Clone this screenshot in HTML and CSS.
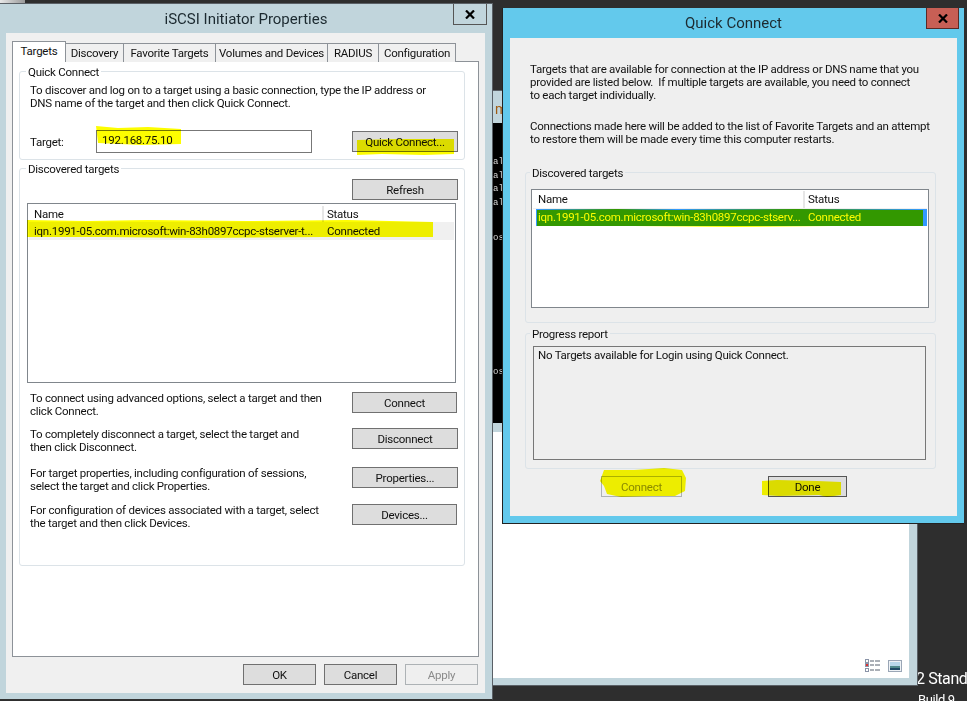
FILE: index.html
```html
<!DOCTYPE html>
<html lang="en">
<head>
    <meta charset="UTF-8">
    <title>iSCSI Initiator Properties</title>
    <link rel="stylesheet" href="styles.css">
</head>
<body>
    <div class="sliver"></div>

    <div class="desktop-text">
        <div class="edition">2 Stand</div>
        <div class="build">Build 9</div>
    </div>

    <!-- window behind the dialogs -->
    <div class="back-window">
        <div class="ribbon">m</div>
        <div class="console">
            <div class="console-line first">al</div>
            <div class="console-line">al</div>
            <div class="console-line">al</div>
            <div class="console-line">al</div>
            <div class="console-line os">os</div>
            <div class="console-line os2">os</div>
        </div>
        <div class="band"></div>
        <div class="back-body">
            <svg class="view-icon" width="16" height="13" viewBox="0 0 16 13">
                <rect x="0.5" y="0.5" width="3" height="3" fill="#fff" stroke="#8a94a8"/>
                <rect x="0.5" y="4.5" width="3" height="3" fill="#d33" stroke="#8a94a8"/>
                <rect x="0.5" y="9.5" width="3" height="3" fill="#fff" stroke="#8a94a8"/>
                <path d="M5 2h4M10 2h5M5 6h4M10 6h5M5 11h4M10 11h5" stroke="#56606e" fill="none"/>
            </svg>
            <svg class="view-icon" width="14" height="12" viewBox="0 0 14 12">
                <rect x="0.5" y="0.5" width="13" height="11" fill="#eef2f6" stroke="#9aa6b6"/>
                <rect x="2" y="2" width="10" height="4" fill="#b8d8ea"/>
                <rect x="2" y="6" width="10" height="2" fill="#4f8a8c"/>
                <rect x="2" y="8" width="10" height="2" fill="#1f4a66"/>
            </svg>
        </div>
    </div>

    <!-- iSCSI Initiator Properties -->
    <div class="window props">
        <div class="title">iSCSI Initiator Properties</div>
        <div class="close">
            <svg width="10" height="9" viewBox="0 0 10 9"><path d="M1 0.5l8 8M9 0.5l-8 8" stroke="#000" stroke-width="2.2" fill="none"/></svg>
        </div>
        <div class="client">
            <div class="tabs">
                <div class="tab active">Targets</div>
                <div class="tab">Discovery</div>
                <div class="tab">Favorite Targets</div>
                <div class="tab">Volumes and Devices</div>
                <div class="tab">RADIUS</div>
                <div class="tab">Configuration</div>
            </div>
            <div class="pane">
                <div class="group quick">
                    <div class="group-title">Quick Connect</div>
                    <p class="text intro">To discover and log on to a target using a basic connection, type the IP address or<br>DNS name of the target and then click Quick Connect.</p>
                    <div class="target-row">
                        <label class="target-label">Target:</label>
                        <div class="input">192.168.75.10</div>
                        <button class="btn wide">Quick Connect...</button>
                    </div>
                </div>
                <div class="group discovered">
                    <div class="group-title">Discovered targets</div>
                    <div class="refresh-row"><button class="btn wide">Refresh</button></div>
                    <div class="list props-list">
                        <div class="list-head">
                            <div class="col-name">Name</div>
                            <div class="col-status">Status</div>
                        </div>
                        <div class="list-row">
                            <div class="col-name">iqn.1991-05.com.microsoft:win-83h0897ccpc-stserver-t...</div>
                            <div class="col-status">Connected</div>
                        </div>
                    </div>
                    <div class="action-row first">
                        <p class="text">To connect using advanced options, select a target and then<br>click Connect.</p>
                        <button class="btn narrow">Connect</button>
                    </div>
                    <div class="action-row">
                        <p class="text">To completely disconnect a target, select the target and<br>then click Disconnect.</p>
                        <button class="btn wide">Disconnect</button>
                    </div>
                    <div class="action-row gap13">
                        <p class="text">For target properties, including configuration of sessions,<br>select the target and click Properties.</p>
                        <button class="btn wide">Properties...</button>
                    </div>
                    <div class="action-row gap11">
                        <p class="text">For configuration of devices associated with a target, select<br>the target and then click Devices.</p>
                        <button class="btn narrow">Devices...</button>
                    </div>
                </div>
            </div>
            <div class="footer">
                <button class="btn foot">OK</button>
                <button class="btn foot">Cancel</button>
                <button class="btn foot disabled">Apply</button>
            </div>
        </div>
    </div>

    <!-- Quick Connect -->
    <div class="window qc">
        <div class="title">Quick Connect</div>
        <div class="close red">
            <svg width="10" height="9" viewBox="0 0 10 9"><path d="M1 0.5l8 8M9 0.5l-8 8" stroke="#000" stroke-width="2.2" fill="none"/></svg>
        </div>
        <div class="client">
            <p class="text qc-p1">Targets that are available for connection at the IP address or DNS name that you<br>provided are listed below.&nbsp; If multiple targets are available, you need to connect<br>to each target individually.</p>
            <p class="text qc-p2">Connections made here will be added to the list of Favorite Targets and an attempt<br>to restore them will be made every time this computer restarts.</p>
            <div class="group qc-targets">
                <div class="group-title">Discovered targets</div>
                <div class="list qc-list">
                    <div class="list-head">
                        <div class="col-name">Name</div>
                        <div class="col-status">Status</div>
                    </div>
                    <div class="list-row selected">
                        <div class="col-name">iqn.1991-05.com.microsoft:win-83h0897ccpc-stserv...</div>
                        <div class="col-status">Connected</div>
                    </div>
                </div>
            </div>
            <div class="group qc-progress">
                <div class="group-title">Progress report</div>
                <div class="report">No Targets available for Login using Quick Connect.</div>
            </div>
            <div class="qc-buttons">
                <button class="btn qc-connect disabled">Connect</button>
                <button class="btn qc-done">Done</button>
            </div>
        </div>
    </div>

    <!-- marker pen strokes drawn on top of the screenshot -->
    <svg class="marker" width="967" height="701" viewBox="0 0 967 701">
        <path d="M96 126l22 2 30-1 33 2v15l-40 1-43-2z"/>
        <path d="M357 140l40-1 57 0v15l-30 1-42-1-25 1z"/>
        <path d="M27 220l60 1 60-1 100 1 100-1 86 2v15l-110 0-120 1-100-1-76 0z"/>
        <path d="M537 210l80-1 60 1 120-1 126 1v16l-90 0-100 1-100-1-96 0z"/>
        <path d="M604 470l30 0 30-2 18 2 4 8-1 13-10 5-24 0-30 1-14-3-3-8-4-5z"/>
        <path d="M762 481l15-1 40 1 24 1v13l-14 2-8-2-40 1-17-1z"/>
    </svg>
</body>
</html>
```

FILE: styles.css
```css
html, body { margin: 0; padding: 0; }
body { width: 967px; height: 701px; overflow: hidden; position: relative; background: #2e2e2e; font-family: Roboto, Arial, sans-serif; font-size: 11.5px; letter-spacing: -0.25px; color: #111; }
p { margin: 0; }

.sliver { position: absolute; left: 0; top: 0; width: 25px; height: 3px; background: linear-gradient(to right, #e8e8e8, #999); }

.desktop-text { position: absolute; left: 916px; top: 666px; width: 51px; height: 35px; overflow: hidden; color: #fff; white-space: nowrap; letter-spacing: -0.4px; }
.edition { font-size: 16px; line-height: 26px; }
.build { font-size: 13px; line-height: 16px; padding-left: 2px; }

.back-window { position: absolute; left: 492px; top: 90px; width: 424px; height: 594px; background: #c1d5dc; border: 1px solid #5a6066; display: flex; flex-direction: column; }
.ribbon { height: 32px; flex: none; padding-left: 2px; font-size: 14px; line-height: 36px; color: #a05a10; }
.console { height: 300px; flex: none; background: #000; font-family: "Liberation Mono", monospace; font-size: 9px; letter-spacing: 0; line-height: 13px; color: #d8d8d8; }
.console-line { height: 13.5px; }
.console-line.first { margin-top: 33px; }
.console-line.os { margin-top: 22px; }
.console-line.os2 { margin-top: 120px; }
.band { height: 9px; flex: none; }
.back-body { flex: 1; margin-bottom: 7px; margin-right: 8px; background: #fff; display: flex; justify-content: flex-end; align-items: flex-end; gap: 7px; padding: 0 7px 6px 0; }

.window { position: absolute; box-sizing: border-box; }
.title { height: 30px; font-size: 15px; letter-spacing: 0; line-height: 30px; text-align: center; color: #1c2a30; }
.close { position: absolute; top: 0; width: 33px; height: 21px; box-sizing: border-box; border: 1px solid #555; border-top: none; display: flex; align-items: center; justify-content: center; }
.client { background: #f0f0f0; box-sizing: border-box; }

.props { left: 0; top: 3px; width: 493px; height: 697px; background: #c1d5dc; border-top: 1px solid #5a6066; border-right: 1px solid #5a6066; border-bottom: 1px solid #333; }
.props .title { height: 29px; }
.props .close { right: 5px; width: 34px; }
.props .client { margin-left: 6px; width: 479px; height: 660px; padding: 8px 0 0 6px; }

.tabs { display: grid; grid-template-columns: 53px 58px 92px 112px 51px 77px; align-items: end; height: 21px; margin-bottom: -1px; position: relative; }
.tab { box-sizing: border-box; height: 19px; margin-right: -1px; border: 1px solid #8d9298; border-bottom: none; background: #f0f0f0; text-align: center; line-height: 18px; white-space: nowrap; }
.tab.active { height: 21px; background: #fff; position: relative; z-index: 1; line-height: 19px; }

.pane { box-sizing: border-box; width: 467px; height: 596px; background: #fff; border: 1px solid #8d9298; padding: 9px 0 0 6px; }

.group { box-sizing: border-box; border: 1px solid #dce3e8; border-radius: 3px; }
.group-title { width: fit-content; margin: -8px 0 0 4px; padding: 0 2px; height: 16px; line-height: 16px; white-space: nowrap; background: #fff; }
.text { line-height: 13px; white-space: nowrap; }

.quick { width: 446px; height: 89px; padding-left: 10px; }
.quick .group-title { margin-left: -4px; }
.intro { margin-top: 4px; }
.target-row { display: flex; align-items: center; margin-top: 20px; }
.target-label { width: 66px; }
.input { box-sizing: border-box; width: 216px; height: 23px; border: 1px solid #777; background: #fff; line-height: 19px; padding-left: 5px; margin-right: 40px; }

.discovered { width: 446px; height: 398px; margin-top: 8px; padding-left: 10px; }
.discovered .group-title { margin-left: -4px; }
.refresh-row { margin: 2px 0 3px 322px; }

.btn { box-sizing: border-box; height: 21px; padding: 0; border: 1px solid #707070; background: #dddddd; font: inherit; letter-spacing: inherit; color: #111; white-space: nowrap; display: block; }
.btn.wide { width: 106px; }
.btn.narrow { width: 105px; }
.btn.foot { width: 73px; }
.btn.disabled { background: #efefef; border-color: #adb2b5; color: #8a8a8a; }

.list { box-sizing: border-box; border: 1px solid #80868c; background: #fff; padding: 2px 1px 0; }
.list-head { display: flex; height: 16px; line-height: 16px; border-bottom: 1px solid #f0f0f0; }
.list-row { display: flex; height: 17px; line-height: 17px; white-space: nowrap; }
.col-name { box-sizing: border-box; padding-left: 5px; flex: none; overflow: hidden; }
.col-status { box-sizing: border-box; padding-left: 3px; flex: 1; }
.list-head .col-status { border-left: 2px solid #e6e6e6; }
.list-row .col-status { padding-left: 5px; }

.props-list { width: 429px; height: 180px; margin-left: -3px; }
.props-list .col-name { width: 293px; }
.props-list .list-row { background: #f0f0f0; }

.action-row { display: flex; height: 26px; margin-top: 10px; }
.action-row .text { width: 322px; flex: none; }
.action-row.first { margin-top: 9px; }
.action-row.gap13 { margin-top: 13px; }
.action-row.gap11 { margin-top: 11px; }

.footer { display: flex; justify-content: flex-end; gap: 8px; margin-top: 7px; padding-right: 7px; }

.qc { left: 502px; top: 8px; width: 462px; height: 516px; background: #63c9ec; border-left: 1px solid #222; border-bottom: 1px solid #222; }
.qc .close { right: 5px; }
.close.red { background: #c75f55; border-color: #5a2a26; }
.qc .client { margin-left: 7px; width: 447px; height: 478px; background: #efefef; padding: 25px 0 0 20px; }
.qc .group-title { background: #efefef; }

.qc-p2 { margin-top: 18px; }
.qc-targets { width: 411px; height: 151px; margin: 26px 0 0 -5px; }
.qc-list { width: 398px; height: 119px; margin: 8px 0 0 5px; padding-top: 1px; }
.qc-list .list-head { height: 17px; line-height: 16px; }
.qc-list .col-name { width: 270px; }
.qc-list .list-row.selected { background: #3399ff; color: #fff; margin-left: 3px; }
.qc-list .selected .col-name { width: 267px; padding-left: 2px; }
.qc-progress { width: 411px; height: 136px; margin: 10px 0 0 -5px; }
.report { box-sizing: border-box; width: 393px; height: 114px; margin: 4px 0 0 7px; border: 1px solid #777; padding: 1px 4px; }
.qc-buttons { display: flex; margin: 7px 0 0 71px; gap: 86px; }
.btn.qc-connect { width: 81px; }
.btn.qc-done { width: 79px; }
.qc-done { background: #dddddd; border-color: #555; }

.marker { position: absolute; left: 0; top: 0; mix-blend-mode: multiply; pointer-events: none; }
.marker path { fill: #fdfd00; }
```
